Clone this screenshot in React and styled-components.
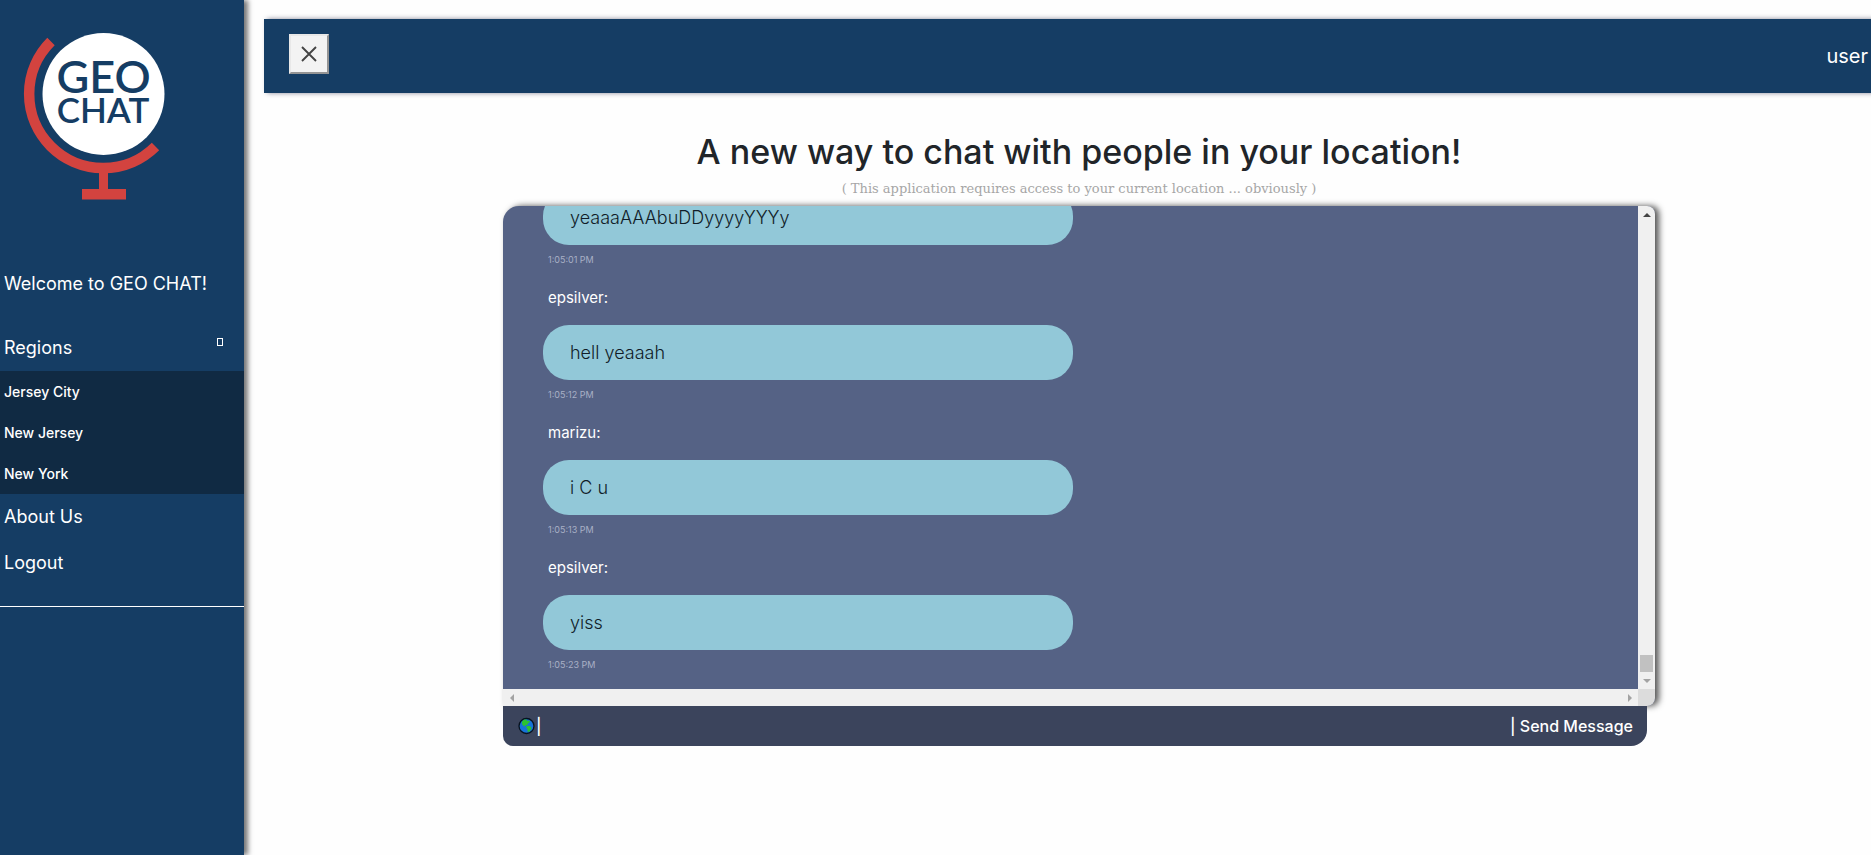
import React from "react";
import styled, { createGlobalStyle, css } from "styled-components";

const GlobalStyle = createGlobalStyle`
  *, *::before, *::after { box-sizing: border-box; }
  body {
    margin: 0;
    background: #fefefe;
    color: #212529;
    font-family: Inter, "Open Sans", sans-serif;
  }
  h1, h2, p, ul { margin: 0; padding: 0; }
  ul { list-style: none; }
  button { font: inherit; cursor: pointer; }
`;

const Shell = styled.div`
  display: flex;
  min-height: 100vh;
  overflow: hidden;
`;

const Sidebar = styled.aside`
  flex: none;
  width: 244px;
  background: #153d64;
  color: #fff;
  box-shadow: 4px 0 5px #777;
`;

const LogoLink = styled.a`
  display: block;
  height: 264px;
  padding: 24px 0 0 20px;

  svg { display: block; }
`;

const Welcome = styled.p`
  height: 61px;
  padding-left: 4px;
  font-size: 18px;
  line-height: 40px;
`;

const Menu = styled.ul`
  padding-bottom: 20px;
  border-bottom: 1px solid #fff;
`;

const MenuLink = styled.a`
  display: flex;
  justify-content: space-between;
  padding: 0 21px 0 4px;
  color: #fff;
  text-decoration: none;
  font-size: ${(p) => (p.$small ? "14px" : "18px")};
  font-weight: ${(p) => (p.$small ? 500 : 400)};
  line-height: ${(p) => (p.$small ? "41px" : "46px")};
`;

const SubMenu = styled.ul`
  background: #102a43;
`;

const Caret = styled.span`
  width: 6px;
  height: 8px;
  margin-top: 13px;
  border: 1px solid #fff;
`;

const Main = styled.main`
  flex: none;
  width: calc(100% - 241px);
  margin-left: 20px;
  padding-top: 19px;
`;

const TopBar = styled.header`
  display: flex;
  align-items: center;
  justify-content: space-between;
  height: 74px;
  padding: 0 26px 0 25px;
  background: #153d64;
  color: #fff;
  box-shadow: 3px 0 5px #889;
  font-size: 20px;
`;

const CloseButton = styled.button`
  display: grid;
  place-items: center;
  width: 40px;
  height: 40px;
  margin-bottom: 4px;
  padding: 0;
  border: 2px outset #e8e8e8;
  background: #f3f3f3;
`;

const Intro = styled.section`
  padding-top: 36px;
  text-align: center;
`;

const Title = styled.h1`
  font-size: 34px;
  font-weight: 500;
  line-height: 46px;
`;

const Notice = styled.p`
  height: 31px;
  color: #a6a6a6;
  font-family: "DejaVu Serif", serif;
  font-size: 13px;
  line-height: 28px;
`;

const Chat = styled.section`
  width: 71%;
  max-width: 1152px;
  margin: 0 auto;
`;

const ChatWindow = styled.div`
  display: grid;
  grid-template: 483px 17px / 1fr 17px;
  overflow: hidden;
  border-radius: 16px 8px 8px 0;
  background: #556285;
  box-shadow: 4px 0 6px #555;
`;

const Messages = styled.ul`
  display: flex;
  flex-direction: column;
  justify-content: flex-end;
  overflow: hidden;
  padding: 0 0 14px 40px;
`;

const Message = styled.li`
  flex: none;
  width: 530px;
`;

const Author = styled.h2`
  padding-left: 5px;
  color: #fff;
  font-size: 15px;
  font-weight: 400;
  line-height: 55px;
`;

const Bubble = styled.p`
  padding-left: 27px;
  border-radius: 26px;
  background: #92c8d8;
  color: #111d28;
  font-size: 18px;
  font-weight: 300;
  line-height: 55px;
`;

const Time = styled.time`
  display: block;
  padding: 4px 0 0 5px;
  color: #a9b0c6;
  font-size: 9px;
  line-height: 21px;
`;

const Track = styled.div`
  display: flex;
  align-items: center;
  justify-content: space-between;
  background: #f0f0f0;
  ${(p) =>
    p.$vertical
      ? css`
          flex-direction: column;
          padding: 6px 0;
        `
      : css`
          padding: 0 6px;
        `}
`;

const ThumbGroup = styled.div`
  display: flex;
  flex-direction: column;
  align-items: center;
  gap: 6px;
`;

const Thumb = styled.div`
  width: 13px;
  height: 17px;
  background: #c1c1c1;
`;

const Corner = styled.div`
  background: #dcdcdc;
`;

const Composer = styled.form`
  position: relative;
  display: flex;
  align-items: center;
  gap: 1px;
  height: 40px;
  margin-right: 8px;
  padding: 0 14px 0 15px;
  border-radius: 0 0 16px 10px;
  background: #3b445c;
  color: #fff;
  font-size: 16px;
  font-weight: 500;
`;

const ComposerInput = styled.input`
  flex: 1;
  min-width: 0;
  border: 0;
  outline: 0;
  background: transparent;
  color: #fff;
  font: inherit;
`;

const SendButton = styled.button`
  padding: 0;
  border: 0;
  background: none;
  color: #fff;
`;

const Logo = () => (
  <svg width="150" height="180" viewBox="20 24 150 180" role="img" aria-label="Geo Chat">
    <circle cx="103.500" cy="94" r="61" fill="#fff" />
    <path d="M51 41.500A74 74 0 1 0 155.500 146.500" fill="none" stroke="#d3433f" strokeWidth="10.500" />
    <path d="M99 170h9v19h18v10.500H82V189h17z" fill="#d3433f" />
    <g fill="#153d64" fontFamily="Lato" fontWeight="600" textAnchor="middle">
      <text x="103.500" y="92.500" fontSize="45">GEO</text>
      <text x="103" y="123" fontSize="35">CHAT</text>
    </g>
  </svg>
);

const CloseIcon = () => (
  <svg width="16" height="16" viewBox="0 0 16 16" aria-hidden="true">
    <path d="M1 1l14 14M15 1L1 15" stroke="#444" strokeWidth="1.900" />
  </svg>
);

const Globe = () => (
  <svg width="17" height="18" viewBox="0 0 17 18" aria-hidden="true">
    <circle cx="8.500" cy="9" r="7.500" fill="#1673d8" stroke="#07121e" strokeWidth="1.300" />
    <path d="M4 4.500L6 2.500l2.500 0 .5 1.500 2-.5 1 1.500-2 1.500-1 2-2-.5.5 1.500-2-.5-1.500-2zM9 9l2.500 0 2 1.500-.5 2-2 2.500-1.500-.5 0-2.500-1.500-1.500z" fill="#2cc22f" />
  </svg>
);

const arrows = {
  up: "M0 5L4 1l4 4z",
  down: "M0 1l4 4 4-4z",
  left: "M5 0L1 4l4 4z",
  right: "M1 0l4 4-4 4z",
};

const Arrow = ({ to, fill = "#a3a3a3" }) => {
  const upright = to === "up" || to === "down";
  return (
    <svg width={upright ? 8 : 5} height={upright ? 5 : 8} aria-hidden="true">
      <path d={arrows[to]} fill={fill} />
    </svg>
  );
};

const regions = ["Jersey City", "New Jersey", "New York"];

const messages = [
  { author: "marizu:", text: "yeaaaAAAbuDDyyyyYYYy", time: "1:05:01 PM" },
  { author: "epsilver:", text: "hell yeaaah", time: "1:05:12 PM" },
  { author: "marizu:", text: "i C u", time: "1:05:13 PM" },
  { author: "epsilver:", text: "yiss", time: "1:05:23 PM" },
];

export default function App() {
  return (
    <>
      <GlobalStyle />
      <Shell>
        <Sidebar>
          <LogoLink href="#"><Logo /></LogoLink>
          <Welcome>Welcome to GEO CHAT!</Welcome>
          <nav>
            <Menu>
              <li>
                <MenuLink href="#regions">Regions<Caret /></MenuLink>
                <SubMenu>
                  {regions.map((name) => (
                    <li key={name}><MenuLink $small href="#regions">{name}</MenuLink></li>
                  ))}
                </SubMenu>
              </li>
              <li><MenuLink href="#about">About Us</MenuLink></li>
              <li><MenuLink href="#logout">Logout</MenuLink></li>
            </Menu>
          </nav>
        </Sidebar>
        <Main>
          <TopBar>
            <CloseButton type="button" aria-label="Close menu"><CloseIcon /></CloseButton>
            <span>user</span>
          </TopBar>
          <Intro>
            <Title>A new way to chat with people in your location!</Title>
            <Notice>( This application requires access to your current location ... obviously )</Notice>
          </Intro>
          <Chat>
            <ChatWindow>
              <Messages>
                {messages.map((m) => (
                  <Message key={m.time}>
                    <Author>{m.author}</Author>
                    <Bubble>{m.text}</Bubble>
                    <Time>{m.time}</Time>
                  </Message>
                ))}
              </Messages>
              <Track $vertical>
                <Arrow to="up" fill="#444" />
                <ThumbGroup>
                  <Thumb />
                  <Arrow to="down" />
                </ThumbGroup>
              </Track>
              <Track>
                <Arrow to="left" />
                <Arrow to="right" />
              </Track>
              <Corner />
            </ChatWindow>
            <Composer onSubmit={(e) => e.preventDefault()}>
              <Globe />
              <span>|</span>
              <ComposerInput aria-label="Message" />
              <SendButton type="submit">| Send Message</SendButton>
            </Composer>
          </Chat>
        </Main>
      </Shell>
    </>
  );
}
